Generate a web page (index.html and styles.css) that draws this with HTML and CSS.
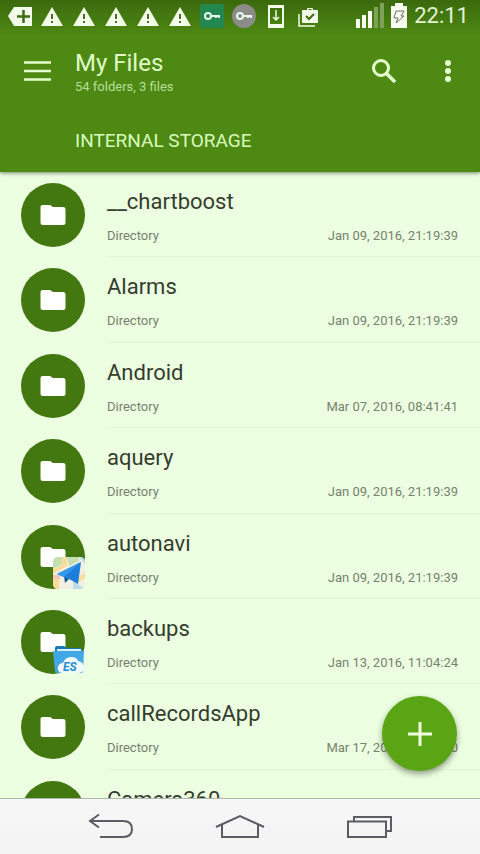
FILE: index.html
```html
<!DOCTYPE html>
<html lang="en">
<head>
<meta charset="utf-8">
<meta name="viewport" content="width=device-width, initial-scale=1">
<title>My Files</title>
<link rel="stylesheet" href="styles.css">
</head>
<body>
<svg width="0" height="0" class="defs" aria-hidden="true">
  <symbol id="warn" viewBox="0 0 24 24"><path fill="#f3fbe9" d="M12 3 23 22H1Z"/><path fill="#55692f" d="M11 10h2v5h-2zM11 17h2v2h-2z"/></symbol>
  <symbol id="folder" viewBox="0 0 26 22"><path fill="#fff" d="M2.500 1H10l3 2h10a2.500 2.500 0 0 1 2.500 2.500v13A2.500 2.500 0 0 1 23 21H3A2.500 2.500 0 0 1 .500 18.500V3a2 2 0 0 1 2-2Z"/></symbol>
  <symbol id="key" viewBox="0 0 24 24"><circle cx="8" cy="12" r="3" fill="none" stroke="#e9f8ef" stroke-width="2"/><path fill="#e9f8ef" d="M11 11h9v3h-2v-1h-1v1h-2v-1h-4z"/></symbol>
</svg>
<div class="screen">
  <header class="header">
    <div class="status">
      <div class="notices">
        <svg class="notice" viewBox="0 0 24 24"><path fill="#f3fbe9" d="M0 12 6 3h18v19H6Z"/><path stroke="#3f6b12" stroke-width="2.500" d="M15.500 6v13M9 12.500h13"/></svg>
        <svg class="notice"><use href="#warn"/></svg>
        <svg class="notice"><use href="#warn"/></svg>
        <svg class="notice"><use href="#warn"/></svg>
        <svg class="notice"><use href="#warn"/></svg>
        <svg class="notice"><use href="#warn"/></svg>
        <svg class="notice"><rect width="24" height="24" rx="3" fill="#23884f"/><use href="#key"/></svg>
        <svg class="notice"><circle cx="12" cy="12" r="12" fill="#8b8b87"/><use href="#key"/></svg>
        <svg class="notice" viewBox="0 0 24 24"><path fill="#f3fbe9" fill-rule="evenodd" d="M4 1h16v23H4zM6 4v16h12V4z"/><path fill="none" stroke="#f3fbe9" stroke-width="1.500" d="M12 6v10M9 13l3 3 3-3"/></svg>
        <svg class="notice" viewBox="0 0 24 24"><path fill="none" stroke="#f3fbe9" stroke-width="1.500" d="M3 10v12h16"/><path fill="#f3fbe9" fill-rule="evenodd" d="M7 6h4V5q0-1 1-1h4q1 0 1 1v1h4q1 0 1 1v11q0 1-1 1H7q-1 0-1-1V7q0-1 1-1Zm5.500 0h3V5h-3Z"/><path fill="none" stroke="#40680f" stroke-width="2" d="m10 12 3 3 5-5"/></svg>
      </div>
      <div class="system">
        <svg class="signal" viewBox="0 0 28 26"><path fill="#f8fdf2" d="M0 16h4v9H0zM6 12h4v13H6zM12 8h4v17h-4z"/><path fill="#7ea25a" d="M18 4h4v21h-4zM24 0h4v25h-4z"/></svg>
        <svg class="battery" viewBox="0 0 16 26"><path fill="#f8fdf2" d="M4 0h8v3h4v22H0V3h4z"/><path fill="none" stroke="#68725f" d="M5 8h8l-3 5h3l-8 7 2-5H3z"/></svg>
        <time class="clock">22:11</time>
      </div>
    </div>
    <div class="toolbar">
      <button class="tool" aria-label="Menu"><svg class="icon" viewBox="0 0 32 24"><path stroke="#e6ffd0" stroke-width="2.500" d="M3 3.500h27M3 12h27M3 20.500h27"/></svg></button>
      <div class="heading"><h1 class="title">My Files</h1><p class="summary">54 folders, 3 files</p></div>
      <button class="tool" aria-label="Search"><svg class="icon" viewBox="0 0 32 24"><circle cx="13" cy="9" r="7.500" fill="none" stroke="#e6ffd0" stroke-width="3"/><path stroke="#e6ffd0" stroke-width="3.500" d="m18 14 9 9"/></svg></button>
      <button class="tool" aria-label="More options"><svg class="icon" viewBox="0 0 32 24"><g fill="#e6ffd0"><circle cx="16" cy="4" r="3"/><circle cx="16" cy="12" r="3"/><circle cx="16" cy="20" r="3"/></g></svg></button>
    </div>
    <h2 class="storage">INTERNAL STORAGE</h2>
  </header>
  <main class="content">
    <ul class="files">
      <li class="file"><span class="avatar"><svg class="folder"><use href="#folder"/></svg></span><div class="info"><span class="name">__chartboost</span><div class="meta"><span>Directory</span><time>Jan 09, 2016, 21:19:39</time></div></div></li>
      <li class="file"><span class="avatar"><svg class="folder"><use href="#folder"/></svg></span><div class="info"><span class="name">Alarms</span><div class="meta"><span>Directory</span><time>Jan 09, 2016, 21:19:39</time></div></div></li>
      <li class="file"><span class="avatar"><svg class="folder"><use href="#folder"/></svg></span><div class="info"><span class="name">Android</span><div class="meta"><span>Directory</span><time>Mar 07, 2016, 08:41:41</time></div></div></li>
      <li class="file"><span class="avatar"><svg class="folder"><use href="#folder"/></svg></span><div class="info"><span class="name">aquery</span><div class="meta"><span>Directory</span><time>Jan 09, 2016, 21:19:39</time></div></div></li>
      <li class="file"><span class="avatar"><svg class="folder"><use href="#folder"/></svg>
        <svg class="badge" viewBox="0 0 32 32"><clipPath id="tile"><rect width="32" height="32" rx="5"/></clipPath><g clip-path="url(#tile)"><path fill="#f3efe2" d="M0 0h32v32H0z"/><path fill="#c5dfb0" d="M0 0h9v7l-9 5zM14 0h12v4l-10 5z"/><path fill="#f7dc9b" d="M9 0h5v9L0 17v-5l9-4zM0 22h6v10H0zM22 22l10-6v5l-8 5v6h-4z"/><path fill="#b9dcef" d="M20 24l12 8H20zM26 0h6v7z"/><path fill="#f2c7b5" d="M0 18h7v4H0z"/></g><path fill="#14558f" d="m11 19 1 7 4-4z"/><path fill="#1b7fdb" d="M28 5 4 17l7 3 5 2 9 5z"/><path fill="#3299ed" d="M28 5 4 17l7 3z"/></svg></span><div class="info"><span class="name">autonavi</span><div class="meta"><span>Directory</span><time>Jan 09, 2016, 21:19:39</time></div></div></li>
      <li class="file"><span class="avatar"><svg class="folder"><use href="#folder"/></svg>
        <svg class="badge" viewBox="0 0 32 32"><path fill="#1979bd" d="M2 6q0-2 2-2h7l3 2h13q2 0 2 2v4H2z"/><path fill="#d8effa" d="M4 7h24v3H4z"/><path fill="#42a7e5" d="M0 9h31l-1 20q0 2-2 2H4q-2 0-2-2z"/><path fill="#f2faff" d="M9 31q-5-1-4-6 1-4 5-4 2-6 8-6 6 0 7 4 6 1 6 7 0 4-5 5z"/><text class="mark" x="10" y="29">ES</text></svg></span><div class="info"><span class="name">backups</span><div class="meta"><span>Directory</span><time>Jan 13, 2016, 11:04:24</time></div></div></li>
      <li class="file"><span class="avatar"><svg class="folder"><use href="#folder"/></svg></span><div class="info"><span class="name">callRecordsApp</span><div class="meta"><span>Directory</span><time>Mar 17, 2016, 12:10:00</time></div></div></li>
      <li class="file"><span class="avatar"><svg class="folder"><use href="#folder"/></svg></span><div class="info"><span class="name">Camera360</span></div></li>
    </ul>
    <button class="add" aria-label="Add"><svg class="plus" viewBox="0 0 24 24"><path stroke="#efffe0" stroke-width="3" d="M12 0v24M0 12h24"/></svg></button>
  </main>
  <nav class="nav" aria-label="System">
    <button class="key" aria-label="Back"><svg class="glyph" viewBox="0 0 50 28"><path d="M14 1.500 5 8l9 6.500M5 8h33q9 0 9 8t-9 8H15"/></svg></button>
    <button class="key" aria-label="Home"><svg class="glyph" viewBox="0 0 50 28"><path d="M1 14 25 3l24 11M7 12v12h36V12"/></svg></button>
    <button class="key" aria-label="Recent apps"><svg class="glyph" viewBox="0 0 50 28"><path d="M3 8.500h38V24H3zM9 8.500V4h37v14h-5"/></svg></button>
  </nav>
</div>
</body>
</html>
```
FILE: styles.css
```css
* {
  box-sizing: border-box;
}

body,
h1,
h2,
p,
ul {
  margin: 0;
  padding: 0;
  font-weight: 400;
}

body {
  font-family: Roboto, "Liberation Sans", sans-serif;
  background: #ecffe0;
}

button {
  display: flex;
  align-items: center;
  justify-content: center;
  padding: 0;
  border: 0;
  background: none;
}

svg {
  display: block;
  flex: none;
}

.defs {
  position: absolute;
}

.screen {
  display: flex;
  flex-direction: column;
  height: 100vh;
  overflow: hidden;
}

.header {
  position: relative;
  z-index: 1;
  flex: none;
  padding-bottom: 20px;
  background: linear-gradient(#3b690d, #4e8a13 36px);
  box-shadow: 0 1px 4px rgba(0, 0, 0, 0.5);
}

.status {
  display: flex;
  justify-content: space-between;
  align-items: center;
  height: 32px;
  padding: 0 11px 0 8px;
}

.notices {
  display: flex;
  gap: 8px;
}

.notice {
  width: 24px;
  height: 24px;
}

.system {
  display: flex;
  align-items: center;
  gap: 7px;
}

.signal {
  width: 28px;
  height: 26px;
}

.battery {
  width: 16px;
  height: 26px;
}

.clock {
  font-size: 22px;
  line-height: 32px;
  color: #e4f2d6;
}

.toolbar {
  display: flex;
  align-items: center;
  height: 78px;
  padding-left: 5px;
}

.tool {
  width: 64px;
  height: 64px;
}

.icon {
  width: 32px;
  height: 24px;
}

.heading {
  flex: 1;
  padding: 4px 0 0 6px;
}

.title {
  font-size: 24px;
  line-height: 28px;
  color: #e0fcc8;
}

.summary {
  font-size: 13px;
  line-height: 20px;
  color: #b8de98;
}

.storage {
  padding: 20px 0 0 75px;
  font-size: 19px;
  line-height: 22px;
  color: #d9fcbd;
}

.content {
  position: relative;
  flex: 1;
  min-height: 0;
  overflow: hidden;
}

.files {
  list-style: none;
}

.file {
  display: flex;
  gap: 22px;
  height: 10vh;
  min-height: 76px;
  padding-left: 21px;
}

.avatar {
  position: relative;
  display: flex;
  align-items: center;
  justify-content: center;
  flex: none;
  width: 64px;
  height: 64px;
  margin-top: 11px;
  border-radius: 50%;
  background: #43770f;
}

.folder {
  width: 26px;
  height: 22px;
}

.badge {
  position: absolute;
  right: 0;
  bottom: 0;
  width: 32px;
  height: 32px;
}

.mark {
  font-size: 12px;
  font-style: italic;
  font-weight: 700;
  fill: #218bd1;
}

.info {
  flex: 1;
  padding: 16px 22px 0 0;
  border-bottom: 1px solid #e1f3d6;
}

.name {
  display: block;
  font-size: 22px;
  line-height: 28px;
  color: #343d2f;
}

.meta {
  display: flex;
  justify-content: space-between;
  padding-top: 10px;
  font-size: 13px;
  line-height: 20px;
  color: #76816f;
}

.add {
  position: absolute;
  right: 23px;
  bottom: 27px;
  width: 75px;
  height: 75px;
  border-radius: 50%;
  background: #5aa514;
  box-shadow: 0 3px 6px rgba(0, 0, 0, 0.4);
}

.plus {
  width: 24px;
  height: 24px;
}

.nav {
  display: flex;
  justify-content: center;
  gap: 15px;
  flex: none;
  height: 56px;
  border-top: 1px solid #aeb5aa;
  background: linear-gradient(#f7f7f8, #f3f3f4);
}

.key {
  width: 115px;
}

.glyph {
  width: 50px;
  height: 28px;
  fill: none;
  stroke: #5b5d62;
  stroke-width: 2;
}
```
